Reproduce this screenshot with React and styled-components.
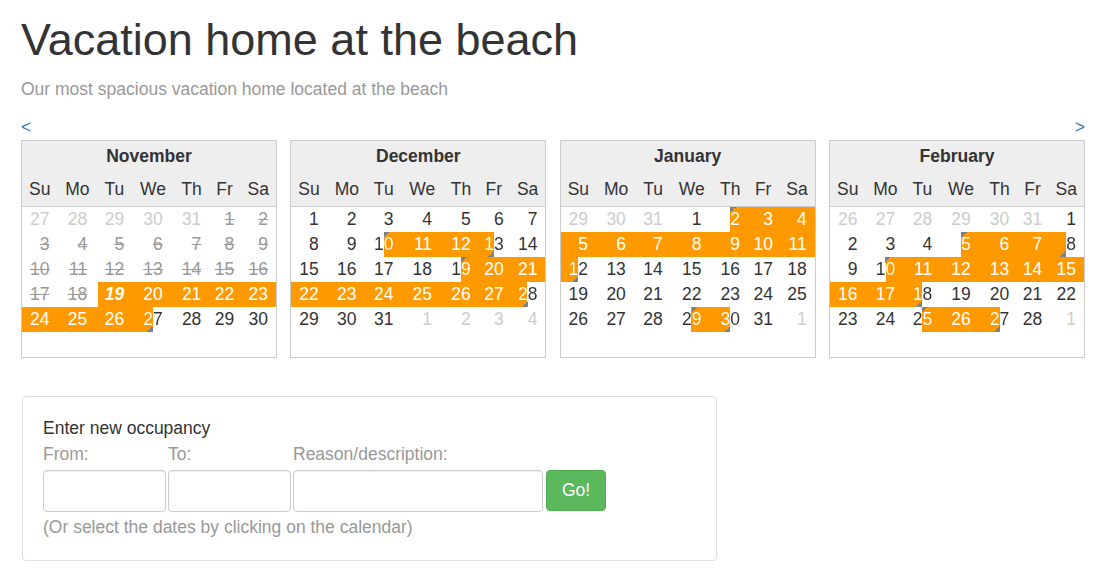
import React from 'react';
import styled, { createGlobalStyle, css } from 'styled-components';

const ORANGE = '#ff9900';
const MARK = '#808080';

const GlobalStyle = createGlobalStyle`
  html, body { margin: 0; padding: 0; background: #fff; }
  body {
    font-family: "Liberation Sans", Arial, Helvetica, sans-serif;
    font-size: 17.5px;
    line-height: 25px;
    color: #333;
  }
  *, *::before, *::after { box-sizing: border-box; }
`;

const Page = styled.div`
  padding: 0 18px 20px 21px;
`;

const Title = styled.h1`
  margin: 15px 0 0;
  font-size: 45px;
  font-weight: 400;
  line-height: 49.5px;
  color: #333;
`;

const Subtitle = styled.p`
  margin: 12px 0 0;
  color: #999;
`;

const Nav = styled.div`
  display: flex;
  justify-content: space-between;
  margin-top: 13px;
`;

const NavLink = styled.a`
  color: #337ab7;
  text-decoration: none;
  cursor: pointer;
`;

const Months = styled.div`
  display: grid;
  grid-template-columns: repeat(4, 1fr);
  column-gap: 13.3px;
  margin-top: 0;
`;

const MonthBox = styled.div`
  border: 1px solid #ccc;
  display: grid;
  grid-template-columns: 1223fr 1389fr 1167fr 1500fr 1167fr 1112fr 1223fr;
`;

const MonthTitle = styled.div`
  grid-column: 1 / -1;
  background: #eee;
  text-align: center;
  font-weight: 700;
  height: 30px;
  line-height: 30px;
`;

const Dow = styled.div`
  background: #eee;
  text-align: center;
  height: 36px;
  padding-top: 2px;
  line-height: 33px;
  border-bottom: 1px solid #ccc;
`;

const startBg = css`
  background:
    linear-gradient(to bottom right, ${MARK} 50%, transparent 50%) calc(50% + 3px) 0 / 6px 6px no-repeat,
    linear-gradient(to right, transparent 50%, ${ORANGE} 50%);
`;

const endBg = css`
  background:
    linear-gradient(to top left, ${MARK} 50%, transparent 50%) calc(50% - 3px) 100% / 6px 6px no-repeat,
    linear-gradient(to right, ${ORANGE} 50%, transparent 50%);
`;

const DayCell = styled.div`
  height: 25px;
  line-height: 25px;
  cursor: ${(p) => (p.$empty ? 'default' : 'pointer')};
  ${(p) => p.$hl === 'full' && css`background: ${ORANGE};`}
  ${(p) => p.$hl === 'start' && startBg}
  ${(p) => p.$hl === 'end' && endBg}
`;

const textColor = (p) => {
  if (p.$hl === 'full') return '#fff';
  if (p.$kind === 'old') return '#ccc';
  if (p.$kind === 'past') return '#999';
  return '#333';
};

const DayNum = styled.span`
  display: block;
  text-align: right;
  padding-right: calc(50% - 9.75px);
  color: ${textColor};
  text-decoration: ${(p) => (p.$kind === 'past' ? 'line-through' : 'none')};
  font-weight: ${(p) => (p.$today ? 700 : 400)};
  font-style: ${(p) => (p.$today ? 'italic' : 'normal')};
  ${(p) =>
    (p.$hl === 'start' || p.$hl === 'end') &&
    css`
      background: linear-gradient(
        to right,
        ${p.$hl === 'start' ? '#333 50%, #fff 50%' : '#fff 50%, #333 50%'}
      );
      -webkit-background-clip: text;
      background-clip: text;
      color: transparent;
    `}
`;

const Panel = styled.div`
  width: 695px;
  margin-top: 38px;
  margin-left: 1px;
  border: 1px solid #ddd;
  border-radius: 4px;
  padding: 19px 20px 20px 20px;
`;

const PanelTitle = styled.div`
  color: #333;
`;

const FieldRow = styled.div`
  display: flex;
  align-items: flex-start;
  gap: 2px;
`;

const Field = styled.label`
  display: flex;
  flex-direction: column;
  width: ${(p) => p.$w}px;
`;

const FieldLabel = styled.span`
  color: #999;
  padding-top: 1px;
  margin-bottom: 3px;
`;

const Input = styled.input`
  height: 42px;
  width: 100%;
  border: 1px solid #ccc;
  border-radius: 4px;
  box-shadow: inset 0 1px 1px rgba(0, 0, 0, 0.075);
  padding: 6px 12px;
  font: inherit;
  color: #555;
`;

const GoButton = styled.button`
  margin-top: 29px;
  margin-left: 1px;
  width: 60px;
  height: 41px;
  background: #5cb85c;
  border: 1px solid #4cae4c;
  border-radius: 4px;
  color: #fff;
  font: inherit;
  cursor: pointer;
`;

const Hint = styled.div`
  color: #999;
  margin-top: 3px;
`;

const DOW = ['Su', 'Mo', 'Tu', 'We', 'Th', 'Fr', 'Sa'];

function buildMonth({ lead = [], days, trail = [], pastUntil = 0, today, ranges = [] }) {
  const hl = {};
  ranges.forEach(([s, e, sm = true, em = true]) => {
    for (let d = s; d <= e; d++) {
      if (d === s && sm) hl[d] = 'start';
      else if (d === e && em) hl[d] = 'end';
      else hl[d] = 'full';
    }
  });
  const cells = [];
  lead.forEach((n) => cells.push({ n, kind: 'old' }));
  for (let d = 1; d <= days; d++) {
    cells.push({
      n: d,
      kind: d <= pastUntil ? 'past' : 'cur',
      hl: hl[d],
      today: d === today,
    });
  }
  trail.forEach((n) => cells.push({ n, kind: 'old' }));
  while (cells.length < 42) cells.push({ empty: true });
  return cells;
}

const MONTHS = [
  {
    name: 'November',
    cells: buildMonth({
      lead: [27, 28, 29, 30, 31],
      days: 30,
      pastUntil: 18,
      today: 19,
      ranges: [[19, 27, false, true]],
    }),
  },
  {
    name: 'December',
    cells: buildMonth({
      days: 31,
      trail: [1, 2, 3, 4],
      ranges: [
        [10, 13],
        [19, 28],
      ],
    }),
  },
  {
    name: 'January',
    cells: buildMonth({
      lead: [29, 30, 31],
      days: 31,
      trail: [1],
      ranges: [
        [2, 12],
        [29, 30],
      ],
    }),
  },
  {
    name: 'February',
    cells: buildMonth({
      lead: [26, 27, 28, 29, 30, 31],
      days: 28,
      trail: [1],
      ranges: [
        [5, 8],
        [10, 18],
        [25, 27],
      ],
    }),
  },
];

function Month({ name, cells }) {
  return (
    <MonthBox>
      <MonthTitle>{name}</MonthTitle>
      {DOW.map((d) => (
        <Dow key={d}>{d}</Dow>
      ))}
      {cells.map((c, i) =>
        c.empty ? (
          <DayCell key={i} $empty />
        ) : (
          <DayCell key={i} $hl={c.hl}>
            <DayNum $hl={c.hl} $kind={c.kind} $today={c.today}>
              {c.n}
            </DayNum>
          </DayCell>
        )
      )}
    </MonthBox>
  );
}

export default function App() {
  return (
    <>
      <GlobalStyle />
      <Page>
        <Title>Vacation home at the beach</Title>
        <Subtitle>Our most spacious vacation home located at the beach</Subtitle>
        <Nav>
          <NavLink>&lt;</NavLink>
          <NavLink>&gt;</NavLink>
        </Nav>
        <Months>
          {MONTHS.map((m) => (
            <Month key={m.name} {...m} />
          ))}
        </Months>
        <Panel>
          <PanelTitle>Enter new occupancy</PanelTitle>
          <FieldRow>
            <Field $w={123}>
              <FieldLabel>From:</FieldLabel>
              <Input type="text" />
            </Field>
            <Field $w={123}>
              <FieldLabel>To:</FieldLabel>
              <Input type="text" />
            </Field>
            <Field $w={250}>
              <FieldLabel>Reason/description:</FieldLabel>
              <Input type="text" />
            </Field>
            <GoButton type="button">Go!</GoButton>
          </FieldRow>
          <Hint>(Or select the dates by clicking on the calendar)</Hint>
        </Panel>
      </Page>
    </>
  );
}
